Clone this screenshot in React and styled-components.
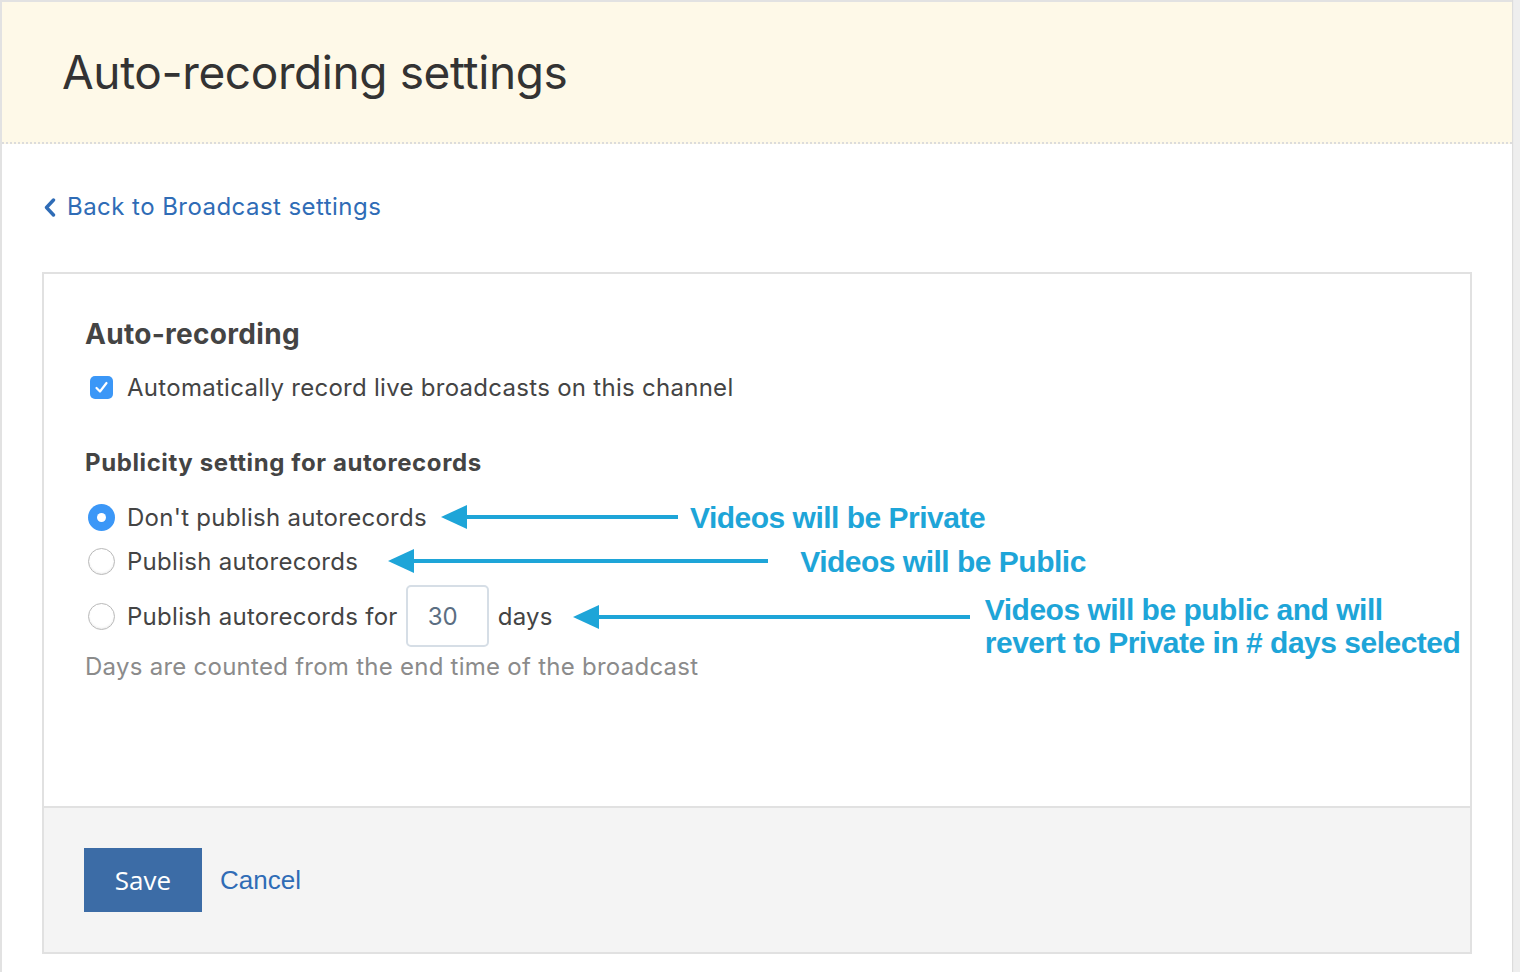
import React from 'react';
import styled, { createGlobalStyle } from 'styled-components';

const GlobalStyle = createGlobalStyle`
    html, body {
        margin: 0;
        padding: 0;
        background: #eeeeee;
    }
    body {
        font-family: Inter, 'Liberation Sans', Arial, sans-serif;
        color: #444;
    }
`;

const Page = styled.div`
    width: 1510px;
    min-height: 970px;
    background: #fff;
    border-top: 2px solid #e2e2e2;
    border-left: 2px solid #e2e2e2;
    box-shadow: 1px 0 1px #dcdcdc;
`;

const Header = styled.header`
    height: 140px;
    background: #fef9e8;
    border-bottom: 2px dotted #dcdcdc;
    display: flex;
    align-items: center;
    padding-left: 60px;
    h1 {
        margin: 0;
        font-weight: 400;
        font-size: 46px;
        color: #333;
        letter-spacing: -0.4px;
    }
`;

const Body = styled.main`
    padding: 48px 40px 0 40px;
`;

const BackLink = styled.a`
    display: inline-flex;
    align-items: center;
    gap: 11px;
    font-size: 24px;
    line-height: 30px;
    letter-spacing: 0.45px;
    color: #2f6cb6;
    text-decoration: none;
    margin-left: 2px;
    cursor: pointer;
    svg {
        width: 12px;
        height: 19px;
    }
`;

const Card = styled.section`
    margin-top: 50px;
    border: 2px solid #e1e1e1;
`;

const CardBody = styled.div`
    padding: 43px 41px 124px 41px;
`;

const Heading = styled.h2`
    margin: 0;
    font-size: 28px;
    line-height: 34px;
    font-weight: 700;
    color: #444;
    letter-spacing: 0.3px;
`;

const SubHeading = styled.h3`
    margin: 44px 0 0 0;
    font-size: 24px;
    line-height: 30px;
    font-weight: 700;
    color: #444;
    letter-spacing: 0.6px;
`;

const Row = styled.label`
    display: flex;
    align-items: center;
    height: ${(p) => p.$height || 44}px;
    margin-top: ${(p) => p.$top || 0}px;
    font-size: 24px;
    letter-spacing: 0.28px;
    color: #444;
    white-space: nowrap;
`;

const CheckBox = styled.span`
    width: 23px;
    height: 23px;
    border-radius: 5px;
    background: #3b97f7;
    display: inline-flex;
    align-items: center;
    justify-content: center;
    margin: 0 14px 0 5px;
    svg {
        width: 15px;
        height: 15px;
    }
`;

const Radio = styled.span`
    box-sizing: border-box;
    width: 27px;
    height: 27px;
    border-radius: 50%;
    margin: 0 12px 0 3px;
    display: inline-flex;
    align-items: center;
    justify-content: center;
    flex-shrink: 0;
    background: ${(p) => (p.$checked ? '#3b97f7' : '#fff')};
    border: ${(p) => (p.$checked ? 'none' : '1px solid #b9b9b9')};
    box-shadow: ${(p) => (p.$checked ? 'none' : 'inset 0 -1px 2px rgba(0,0,0,0.08)')};
    &::after {
        content: '';
        display: ${(p) => (p.$checked ? 'block' : 'none')};
        width: 9px;
        height: 9px;
        border-radius: 50%;
        background: #fff;
    }
`;

const DaysInput = styled.input`
    box-sizing: border-box;
    width: 83px;
    height: 62px;
    margin: 0 9px 0 8px;
    border: 2px solid #d6dee6;
    border-radius: 5px;
    font-family: Inter, 'Liberation Sans', Arial, sans-serif;
    font-size: 24px;
    color: #5b6e82;
    padding: 0 0 0 20px;
    background: #fff;
    outline: none;
`;

const Hint = styled.p`
    margin: 5px 0 0 0;
    font-size: 24px;
    line-height: 30px;
    letter-spacing: 0.26px;
    color: #8b8b8b;
`;

const Note = styled.span`
    display: inline-flex;
    align-items: ${(p) => (p.$multi ? 'flex-start' : 'center')};
    margin-left: ${(p) => p.$gap}px;
    align-self: ${(p) => (p.$multi ? 'flex-start' : 'center')};
    margin-top: ${(p) => (p.$multi ? 20 : 0)}px;
    letter-spacing: normal;
    svg {
        flex-shrink: 0;
        height: 24px;
    }
`;

const NoteText = styled.span`
    margin-left: ${(p) => p.$gap}px;
    font-family: 'Liberation Sans', Arial, sans-serif;
    font-size: 30px;
    line-height: 33px;
    height: 33px;
    font-weight: 700;
    color: #1ea5d8;
    letter-spacing: -0.5px;
    white-space: nowrap;
    margin-top: ${(p) => (p.$multi ? -12 : 0)}px;
`;

const Footer = styled.div`
    background: #f4f4f4;
    border-top: 2px solid #e1e1e1;
    padding: 40px 40px 40px 40px;
    display: flex;
    align-items: center;
    gap: 18px;
`;

const SaveButton = styled.button`
    width: 118px;
    height: 64px;
    background: #3c6ca6;
    color: #fff;
    border: none;
    font-family: 'Open Sans', sans-serif;
    font-size: 26px;
    cursor: pointer;
`;

const CancelLink = styled.a`
    font-family: 'Liberation Sans', Arial, sans-serif;
    font-size: 26px;
    color: #2f6cb6;
    cursor: pointer;
`;

const Arrow = ({ width }) => (
    <svg width={width} viewBox={`0 0 ${width} 24`}>
        <polygon points="0,12 26,0 26,24" fill="#1ea5d8" />
        <rect x="20" y="10" width={width - 20} height="4" fill="#1ea5d8" />
    </svg>
);

const Annotation = ({ gap, arrow, textGap, multi, children }) => (
    <Note $gap={gap} $multi={multi}>
        <Arrow width={arrow} />
        <NoteText $gap={textGap} $multi={multi}>{children}</NoteText>
    </Note>
);

const App = () => (
    <>
        <GlobalStyle />
        <Page>
            <Header>
                <h1>Auto-recording settings</h1>
            </Header>
            <Body>
                <BackLink>
                    <svg viewBox="0 0 12 19">
                        <polyline
                            points="9.5,2 2.5,9.5 9.5,17"
                            fill="none"
                            stroke="#2f6cb6"
                            strokeWidth="3.4"
                            strokeLinecap="round"
                            strokeLinejoin="round"
                        />
                    </svg>
                    Back to Broadcast settings
                </BackLink>
                <Card>
                    <CardBody>
                        <Heading>Auto-recording</Heading>
                        <Row $height={34} $top={19}>
                            <CheckBox>
                                <svg viewBox="0 0 15 15">
                                    <polyline
                                        points="2.5,8 6,11.5 12.5,3"
                                        fill="none"
                                        stroke="#fff"
                                        strokeWidth="2.2"
                                        strokeLinecap="round"
                                        strokeLinejoin="round"
                                    />
                                </svg>
                            </CheckBox>
                            Automatically record live broadcasts on this channel
                        </Row>
                        <SubHeading>Publicity setting for autorecords</SubHeading>
                        <Row $top={17}>
                            <Radio $checked />
                            Don't publish autorecords
                            <Annotation gap={14} arrow={237} textGap={12}>
                                Videos will be Private
                            </Annotation>
                        </Row>
                        <Row>
                            <Radio />
                            Publish autorecords
                            <Annotation gap={30} arrow={380} textGap={32}>
                                Videos will be Public
                            </Annotation>
                        </Row>
                        <Row $height={62} $top={2}>
                            <Radio />
                            Publish autorecords for
                            <DaysInput defaultValue="30" />
                            days
                            <Annotation gap={20} arrow={397} textGap={15} multi>
                                Videos will be public and will
                                <br />
                                revert to Private in # days selected
                            </Annotation>
                        </Row>
                        <Hint>Days are counted from the end time of the broadcast</Hint>
                    </CardBody>
                    <Footer>
                        <SaveButton>Save</SaveButton>
                        <CancelLink>Cancel</CancelLink>
                    </Footer>
                </Card>
            </Body>
        </Page>
    </>
);

export default App;
